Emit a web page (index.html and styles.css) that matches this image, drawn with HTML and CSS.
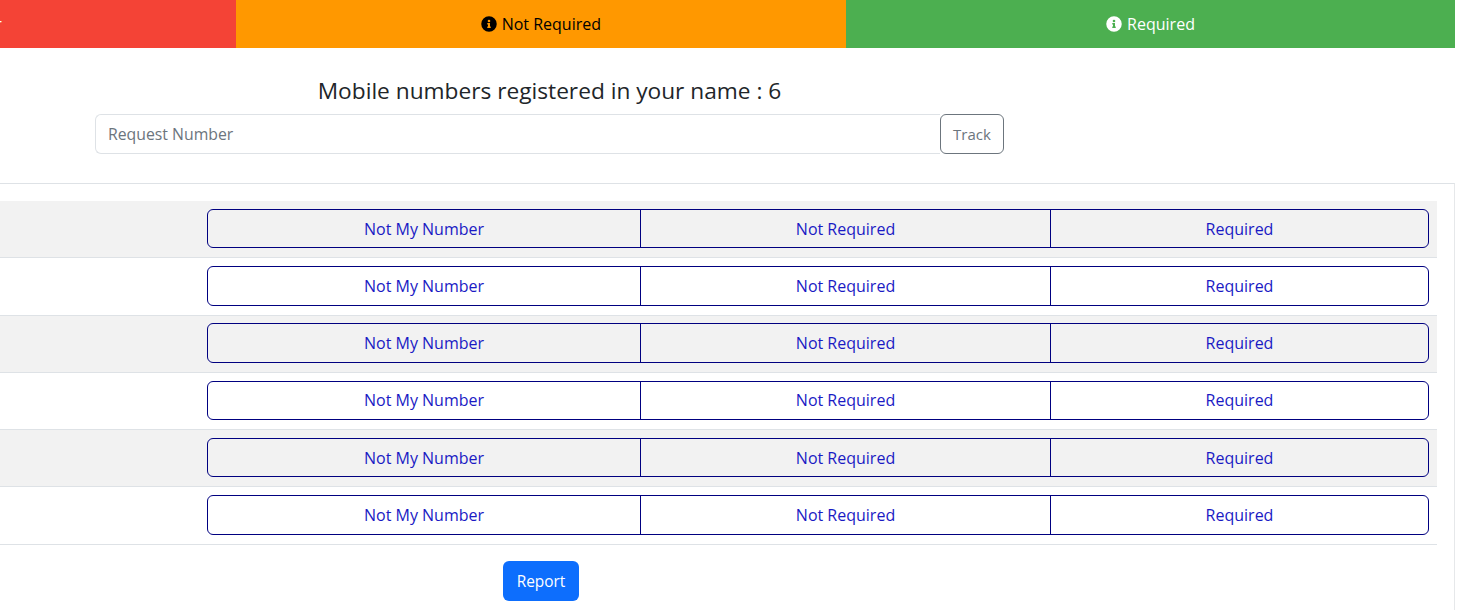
FILE: index.html
```html
<!DOCTYPE html>
<html lang="en">
<head>
<meta charset="utf-8">
<title>Mobile numbers</title>
<link rel="stylesheet" href="styles.css">
</head>
<body>
<svg class="defs" width="0" height="0" aria-hidden="true">
  <symbol id="info" viewBox="0 0 512 512">
    <path fill-rule="evenodd" d="M256 8a248 248 0 1 0 0 496 248 248 0 0 0 0-496zm0 110a42 42 0 1 1 0 84 42 42 0 0 1 0-84zm56 254c0 7-5 12-12 12h-88c-7 0-12-5-12-12v-24c0-7 5-12 12-12h12v-64h-12c-7 0-12-5-12-12v-24c0-7 5-12 12-12h64c7 0 12 5 12 12v100h12c7 0 12 5 12 12z"/>
  </symbol>
</svg>
<div class="page">
  <div class="legend">
    <div class="seg seg-red"><svg class="ico"><use href="#info"/></svg> Not My Number</div>
    <div class="seg seg-orange"><svg class="ico"><use href="#info"/></svg> Not Required</div>
    <div class="seg seg-green"><svg class="ico"><use href="#info"/></svg> Required</div>
  </div>
  <div class="search">
    <h1 class="title">Mobile numbers registered in your name : 6</h1>
    <div class="input-group">
      <input class="input" type="text" placeholder="Request Number">
      <button class="track" type="button">Track</button>
    </div>
  </div>
  <div class="card">
    <div class="row striped"><div class="group"><button class="opt" type="button">Not My Number</button><button class="opt" type="button">Not Required</button><button class="opt" type="button">Required</button></div></div>
    <div class="row"><div class="group"><button class="opt" type="button">Not My Number</button><button class="opt" type="button">Not Required</button><button class="opt" type="button">Required</button></div></div>
    <div class="row striped"><div class="group"><button class="opt" type="button">Not My Number</button><button class="opt" type="button">Not Required</button><button class="opt" type="button">Required</button></div></div>
    <div class="row"><div class="group"><button class="opt" type="button">Not My Number</button><button class="opt" type="button">Not Required</button><button class="opt" type="button">Required</button></div></div>
    <div class="row striped"><div class="group"><button class="opt" type="button">Not My Number</button><button class="opt" type="button">Not Required</button><button class="opt" type="button">Required</button></div></div>
    <div class="row"><div class="group"><button class="opt" type="button">Not My Number</button><button class="opt" type="button">Not Required</button><button class="opt" type="button">Required</button></div></div>
    <div class="actions"><button class="report" type="button">Report</button></div>
  </div>
</div>
</body>
</html>
```
FILE: styles.css
```css
* { box-sizing: border-box; }
html, body { margin: 0; height: 100%; overflow: hidden; background: #fff; }
body { font-family: "Open Sans", "Noto Sans", sans-serif; font-size: 16px; color: #212529; }
button, input { font: inherit; }
.defs { position: absolute; }
.page { width: 1455px; }
.legend { display: flex; height: 48px; margin-left: -373.67px; width: 1829px; }
.seg { flex: 1; display: flex; align-items: center; justify-content: center; gap: 5px; line-height: 48px; }
.ico { width: 16px; height: 16px; fill: currentColor; }
.seg-red { background: #f44336; color: #fff; }
.seg-orange { background: #ff9800; color: #000; }
.seg-green { background: #4caf50; color: #fff; }
.search { margin: 0 0 0 95px; width: 909px; }
.title { margin: 0; padding-top: 27px; height: 66px; text-align: center; font-size: 22.7px; font-weight: 400; line-height: 32px; }
.input-group { display: flex; height: 40px; }
.input { flex: 1; min-width: 0; padding: 0 12px; border: 1px solid #dee2e6; border-right: 0; border-radius: 6px 0 0 6px; color: #212529; background: #fff; outline: 0; font-size: 15.8px; }
.input::placeholder { color: #6c757d; opacity: 1; }
.track { width: 64px; padding: 0; border: 1px solid #6c757d; border-radius: 6px; background: #fff; color: #6c757d; font-size: 15px; }
.card { margin: 29px 0 0 -20px; padding: 17px 17px 0 0; border: 1px solid #dee2e6; border-right-color: #e6e8ea; height: 500px; }
.row { display: flex; justify-content: flex-end; align-items: center; height: 57.25px; padding: 0 8px 1px 0; border-bottom: 1px solid #dee2e6; }
.striped { background: #f2f2f2; }
.group { display: grid; grid-template-columns: 432px 410px 378px; height: 39.5px; border: 1px solid #000080; border-radius: 6px; }
.opt { padding: 0; border: 0; background: transparent; color: #1a1ac4; }
.opt + .opt { border-left: 1px solid #000080; }
.actions { padding: 16.5px 0 0 522px; }
.report { width: 76px; height: 40px; padding: 0; border: 0; border-radius: 6px; background: #0d6efd; color: #fff; font-size: 15.4px; }
```
